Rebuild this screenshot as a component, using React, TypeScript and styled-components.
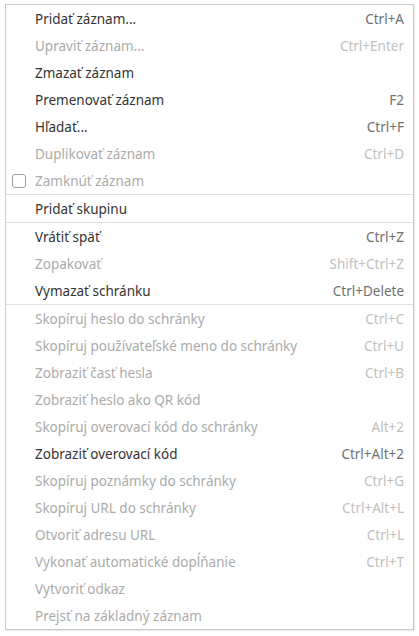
import React from "react";
import styled, { createGlobalStyle } from "styled-components";

const Global = createGlobalStyle`
  html, body { margin: 0; padding: 0; background: #ffffff; }
  body { font-family: "Noto Sans", "Open Sans", sans-serif; }
`;

const Page = styled.div`
  padding: 4px 5px 5px 5px;
`;

const Menu = styled.div`
  width: 407px;
  border: 1px solid #c9c9c9;
  box-shadow: 1px 1px 1px rgba(0, 0, 0, 0.08);
  background: #ffffff;
  display: flex;
  flex-direction: column;
`;

const Row = styled.div<{ $disabled?: boolean }>`
  height: 27px;
  display: flex;
  align-items: center;
  padding: 0 9px 0 6px;
  font-size: 13.5px;
  color: ${(p) => (p.$disabled ? "#ababab" : "#333333")};
`;

const IconSlot = styled.div`
  width: 23px;
  display: flex;
  align-items: center;
`;

const Box = styled.span`
  width: 14px;
  height: 14px;
  border: 1px solid #a0a0a0;
  border-radius: 3px;
  box-sizing: border-box;
  display: inline-block;
`;

const Label = styled.span`
  flex: 1;
  white-space: nowrap;
`;

const Shortcut = styled.span<{ $disabled?: boolean }>`
  color: ${(p) => (p.$disabled ? "#c0c0c0" : "#707070")};
  white-space: nowrap;
`;

const Separator = styled.div`
  height: 1px;
  background: #dedede;
`;

type Item = { label: string; key?: string; disabled?: boolean; check?: boolean };

const groups: Item[][] = [
  [
    { label: "Pridať záznam...", key: "Ctrl+A" },
    { label: "Upraviť záznam...", key: "Ctrl+Enter", disabled: true },
    { label: "Zmazať záznam" },
    { label: "Premenovať záznam", key: "F2" },
    { label: "Hľadať...", key: "Ctrl+F" },
    { label: "Duplikovať záznam", key: "Ctrl+D", disabled: true },
    { label: "Zamknúť záznam", disabled: true, check: true },
  ],
  [{ label: "Pridať skupinu" }],
  [
    { label: "Vrátiť späť", key: "Ctrl+Z" },
    { label: "Zopakovať", key: "Shift+Ctrl+Z", disabled: true },
    { label: "Vymazať schránku", key: "Ctrl+Delete" },
  ],
  [
    { label: "Skopíruj heslo do schránky", key: "Ctrl+C", disabled: true },
    { label: "Skopíruj používateľské meno do schránky", key: "Ctrl+U", disabled: true },
    { label: "Zobraziť časť hesla", key: "Ctrl+B", disabled: true },
    { label: "Zobraziť heslo ako QR kód", disabled: true },
    { label: "Skopíruj overovací kód do schránky", key: "Alt+2", disabled: true },
    { label: "Zobraziť overovací kód", key: "Ctrl+Alt+2" },
    { label: "Skopíruj poznámky do schránky", key: "Ctrl+G", disabled: true },
    { label: "Skopíruj URL do schránky", key: "Ctrl+Alt+L", disabled: true },
    { label: "Otvoriť adresu URL", key: "Ctrl+L", disabled: true },
    { label: "Vykonať automatické dopĺňanie", key: "Ctrl+T", disabled: true },
    { label: "Vytvoriť odkaz", disabled: true },
    { label: "Prejsť na základný záznam", disabled: true },
  ],
];

export default function App() {
  return (
    <>
      <Global />
      <Page>
        <Menu>
          {groups.map((g, gi) => (
            <React.Fragment key={gi}>
              {gi > 0 && <Separator />}
              {g.map((it) => (
                <Row key={it.label} $disabled={it.disabled}>
                  <IconSlot>{it.check && <Box />}</IconSlot>
                  <Label>{it.label}</Label>
                  {it.key && <Shortcut $disabled={it.disabled}>{it.key}</Shortcut>}
                </Row>
              ))}
            </React.Fragment>
          ))}
        </Menu>
      </Page>
    </>
  );
}
